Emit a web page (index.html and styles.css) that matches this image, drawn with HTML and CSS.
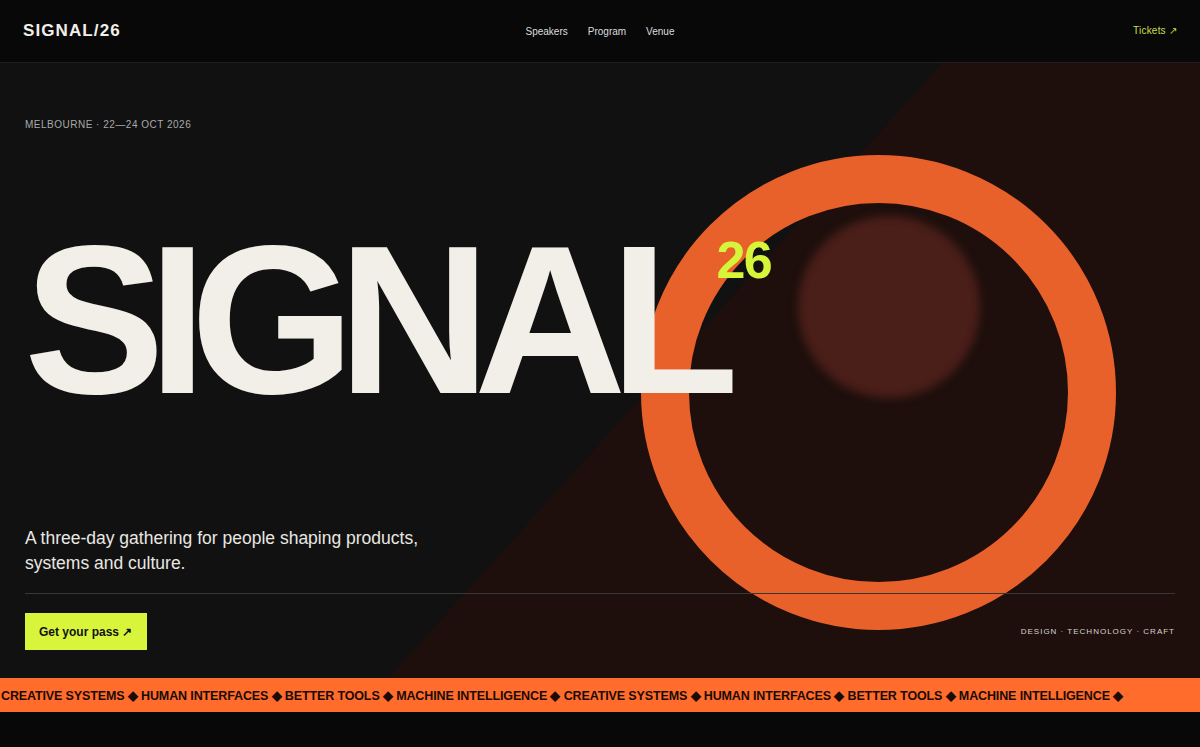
FILE: index.html
```html
<!DOCTYPE html>
<html lang="en">
<head>
<meta charset="utf-8">
<title>SIGNAL/26</title>
<link rel="stylesheet" href="styles.css">
</head>
<body>
<header class="topbar">
  <div class="logo">SIGNAL/26</div>
  <nav class="nav">
    <a href="#">Speakers</a>
    <a href="#">Program</a>
    <a href="#">Venue</a>
  </nav>
  <a class="tickets" href="#">Tickets ↗</a>
</header>

<section class="hero">
  <div class="ring"></div>
  <div class="orb"></div>

  <p class="eyebrow">MELBOURNE · 22—24 OCT 2026</p>
  <h1 class="title"><span class="word">SIGNAL</span><span class="year">26</span></h1>
  <p class="tagline">A three-day gathering for people shaping products, systems and culture.</p>
  <div class="rule"></div>
  <div class="actions">
    <a class="cta" href="#">Get your pass ↗</a>
    <span class="topics">DESIGN · TECHNOLOGY · CRAFT</span>
  </div>
</section>

<div class="marquee">
  <div class="track">CREATIVE SYSTEMS ◆ HUMAN INTERFACES ◆ BETTER TOOLS ◆ MACHINE INTELLIGENCE ◆ CREATIVE SYSTEMS ◆ HUMAN INTERFACES ◆ BETTER TOOLS ◆ MACHINE INTELLIGENCE ◆</div>
</div>
<div class="after"></div>
</body>
</html>
```

FILE: styles.css
```css
* { box-sizing: border-box; }

html, body {
  margin: 0;
  padding: 0;
  background: #080808;
  font-family: "Liberation Sans", Arial, sans-serif;
  color: #f2efe8;
  overflow: hidden;
}

a { text-decoration: none; color: inherit; }

.topbar {
  height: 63px;
  display: flex;
  align-items: center;
  justify-content: space-between;
  padding: 0 23px 1px 23px;
  background: #080808;
  border-bottom: 1px solid #1f1f1f;
  position: relative;
}

.logo {
  font-weight: 700;
  font-size: 17px;
  letter-spacing: 0.065em;
  color: #f2efe8;
}

.nav {
  position: absolute;
  left: 50%;
  top: 0;
  height: 62px;
  transform: translateX(-50%);
  display: flex;
  align-items: center;
  gap: 20px;
}

.nav a {
  font-size: 10px;
  letter-spacing: 0;
  color: #dcdcdc;
}

.tickets {
  font-size: 10px;
  letter-spacing: 0.02em;
  color: #c9de4e;
}

.hero {
  position: relative;
  height: 615px;
  overflow: hidden;
  padding: 56px 25px 0 25px;
  display: flex;
  flex-direction: column;
  background: linear-gradient(132deg, #111111 53.7%, #1e0f0c 53.8%);
}

.ring {
  position: absolute;
  left: 641px;
  top: 92px;
  width: 475px;
  height: 475px;
  border-radius: 50%;
  border: 48px solid #e8612a;
}

.orb {
  position: absolute;
  left: 798px;
  top: 153px;
  width: 182px;
  height: 182px;
  border-radius: 50%;
  background: #4a1e19;
  filter: blur(4px);
}

.eyebrow {
  position: relative;
  margin: 0;
  font-size: 10px;
  line-height: 12px;
  letter-spacing: 0.05em;
  color: #a9a9a9;
}

.title {
  position: relative;
  margin: 84px 0 0 -1px;
  display: flex;
  align-items: flex-start;
  font-weight: 700;
  line-height: 1;
}

.word {
  font-size: 211px;
  line-height: 211px;
  letter-spacing: -0.078em;
  color: #f2efe8;
}

.year {
  font-size: 52px;
  line-height: 52px;
  margin-top: 19px;
  margin-left: -6px;
  letter-spacing: -0.03em;
  color: #d6f53a;
}

.tagline {
  position: relative;
  margin: 100px 0 0 0;
  max-width: 440px;
  font-size: 17.5px;
  line-height: 25px;
  color: #e9e7e2;
}

.rule {
  position: relative;
  margin-top: 17px;
  height: 1px;
  background: #3a3634;
}

.actions {
  position: relative;
  margin-top: 19px;
  display: flex;
  align-items: center;
  justify-content: space-between;
}

.cta {
  display: inline-flex;
  align-items: center;
  height: 37px;
  padding: 0 15px 0 14px;
  background: #d8f53c;
  color: #111;
  font-weight: 700;
  font-size: 12px;
}

.topics {
  font-size: 8px;
  letter-spacing: 0.125em;
  color: #d6d3d0;
}

.marquee {
  height: 34px;
  background: #ff6c2c;
  display: flex;
  align-items: center;
  overflow: hidden;
}

.track {
  white-space: nowrap;
  font-weight: 700;
  font-size: 12.5px;
  letter-spacing: -0.01em;
  color: #1a0b06;
  padding-left: 1px;
}

.after {
  height: 40px;
  background: #080808;
}
```
